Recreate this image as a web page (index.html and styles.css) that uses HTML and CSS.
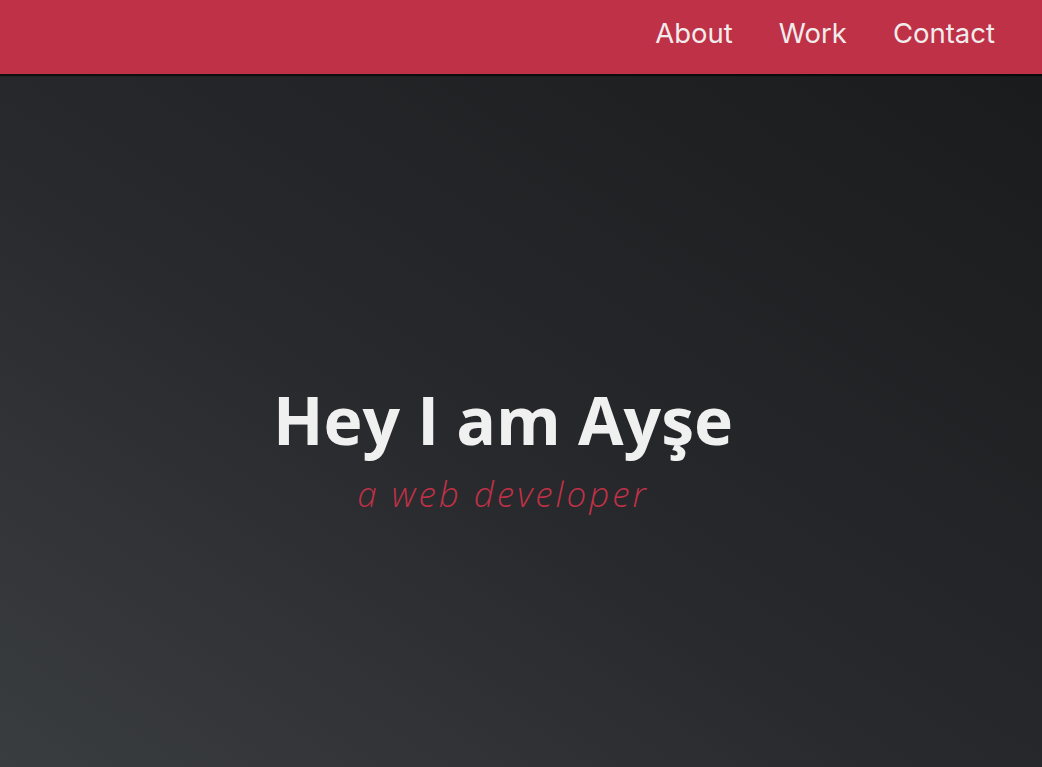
FILE: index.html
```html
<!DOCTYPE html>
<html lang="en">
<head>
<meta charset="utf-8">
<title>Ayşe</title>
<link rel="stylesheet" href="styles.css">
</head>
<body>
<header class="topbar">
  <nav class="menu">
    <a class="menu-link" href="#about">About</a>
    <a class="menu-link" href="#work">Work</a>
    <a class="menu-link" href="#contact">Contact</a>
  </nav>
</header>
<main class="hero">
  <h1 class="hero-title">Hey I am Ayşe</h1>
  <p class="hero-sub">a web developer</p>
</main>
</body>
</html>
```
FILE: styles.css
```css
html, body {
  margin: 0;
  padding: 0;
  height: 100%;
}
body {
  display: flex;
  flex-direction: column;
  background: #1b1c1e;
  overflow: hidden;
}
.topbar {
  height: 74px;
  background: #bf3147;
  box-shadow: 0 2px 1px rgba(0, 0, 0, 0.6);
  display: flex;
  justify-content: flex-end;
  align-items: center;
  position: relative;
  z-index: 1;
  flex: none;
}
.menu {
  display: flex;
  gap: 46px;
  padding-right: 47px;
  padding-bottom: 8px;
}
.menu-link {
  font-family: Inter, "Noto Sans", sans-serif;
  font-size: 27.5px;
  color: #f1ecec;
  text-decoration: none;
}
.hero {
  flex: 1;
  background: linear-gradient(to top right, #3a3d40 0%, #28292c 45%, #1a1b1d 100%);
  display: flex;
  flex-direction: column;
  align-items: center;
  justify-content: center;
  padding: 56px 36px 0 0;
}
.hero-title {
  margin: 0;
  font-family: "Open Sans", Lato, sans-serif;
  font-weight: 700;
  font-size: 66px;
  line-height: 1;
  color: #f0f0f0;
}
.hero-sub {
  margin: 24px 0 0;
  font-family: "Open Sans", Lato, sans-serif;
  font-weight: 300;
  font-style: italic;
  font-size: 35px;
  line-height: 1;
  color: #bf3147;
  letter-spacing: 3px;
}
```
